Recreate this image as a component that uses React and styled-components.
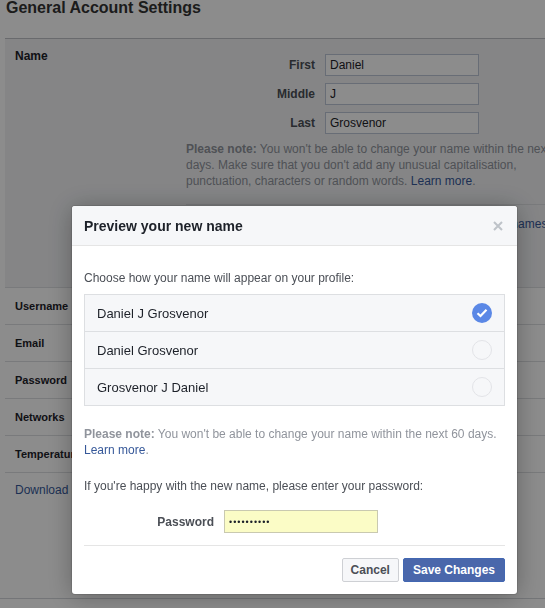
import React from 'react';
import styled, { createGlobalStyle } from 'styled-components';

const GlobalStyle = createGlobalStyle`
  html, body {
    margin: 0;
    padding: 0;
    background: #fff;
    overflow: hidden;
  }
  body {
    font-family: "Liberation Sans", Arial, Helvetica, sans-serif;
    font-size: 12px;
    color: #1d2129;
  }
`;

const Page = styled.div`
  width: 640px;
  height: 608px;
  position: relative;
`;

const Settings = styled.div`
  margin-left: 5px;
`;

const Title = styled.h2`
  margin: 0;
  padding: 0 0 22px 1px;
  font-size: 16px;
  line-height: 16px;
  font-weight: bold;
  color: #333;
  border-bottom: 1px solid #bfc2c7;
`;

const NameSection = styled.div`
  display: flex;
  background: #f2f3f5;
  height: 249px;
  box-sizing: border-box;
  padding: 9px 0 0 10px;
  border-bottom: 1px solid #dddfe2;
`;

const SectionLabel = styled.div`
  width: 171px;
  font-weight: bold;
  font-size: 12px;
  line-height: 16px;
  color: #1d2129;
`;

const SectionBody = styled.div`
  margin-top: 6px;
  width: 410px;
`;

const FieldRow = styled.div`
  display: flex;
  align-items: center;
  gap: 10px;
  margin-bottom: 7px;
`;

const FieldLabel = styled.label`
  width: ${(p) => p.$width || 129}px;
  text-align: right;
  font-weight: bold;
  font-size: 12px;
  color: #4b4f56;
`;

const TextInput = styled.input`
  box-sizing: border-box;
  width: 154px;
  height: ${(p) => p.$height || 22}px;
  padding: 0 4px;
  border: 1px solid ${(p) => (p.$autofill ? '#c9c9b0' : '#bdc7d8')};
  background: ${(p) => (p.$autofill ? '#fbfcc6' : '#fff')};
  font-family: "Liberation Sans", Arial, sans-serif;
  font-size: 12px;
  color: #1d2129;
  outline: none;

  &[type='password'] {
    font-size: 9px;
    letter-spacing: 1px;
  }
`;

const Note = styled.p`
  margin: 0;
  width: 388px;
  font-size: 12px;
  line-height: 16px;
  color: #90949c;
  b {
    font-weight: bold;
  }
`;

const Link = styled.a`
  color: #365899;
  text-decoration: none;
  cursor: pointer;
`;

const SectionFooter = styled.div`
  margin-top: 15px;
  border-top: 1px solid #dddfe2;
  padding-top: 11px;
  line-height: 16px;
  display: flex;
`;

const OtherNames = styled(Link)`
  margin-left: 270px;
  font-size: 12px;
`;

const Row = styled.div`
  display: flex;
  align-items: center;
  height: 36px;
  padding-left: 10px;
  border-bottom: 1px solid #dddfe2;
  font-size: 11px;
  font-weight: bold;
  color: #1d2129;
`;

const DownloadRow = styled.div`
  padding: 9px 10px;
  line-height: 16px;
  font-size: 12px;
`;

const Footer = styled.div`
  margin-top: 91px;
  border-top: 1px solid #d3d6db;
  margin-left: -5px;
`;

const Overlay = styled.div`
  position: fixed;
  inset: 0;
  background: rgba(0, 0, 0, 0.45);
`;

const Dialog = styled.div`
  position: fixed;
  top: 206px;
  left: 72px;
  width: 445px;
  background: #fff;
  border-radius: 3px;
  box-shadow: 0 2px 26px rgba(0, 0, 0, 0.3), 0 0 0 1px rgba(0, 0, 0, 0.1);
  overflow: hidden;
`;

const DialogHeader = styled.div`
  display: flex;
  align-items: center;
  justify-content: space-between;
  height: 39px;
  padding: 0 12px;
  background: #f6f7f9;
  border-bottom: 1px solid #e5e5e5;
`;

const DialogTitle = styled.h3`
  margin: 0;
  font-size: 14px;
  font-weight: bold;
  color: #1d2129;
`;

const Close = styled.button`
  border: 0;
  background: none;
  padding: 0;
  width: 12px;
  height: 12px;
  display: flex;
  align-items: center;
  justify-content: center;
  margin-right: 1px;
  cursor: pointer;
`;

const DialogBody = styled.div`
  padding: 24px 12px 12px;
`;

const Text = styled.p`
  margin: 0 0 ${(p) => p.$gap || 0}px;
  font-size: 12px;
  line-height: 16px;
  color: ${(p) => p.$color || '#4b4f56'};
  b {
    font-weight: bold;
  }
`;

const Choices = styled.div`
  border: 1px solid #dddfe2;
  background: #f6f7f9;
  margin: 8px 0 20px;
`;

const Choice = styled.div`
  display: flex;
  align-items: center;
  justify-content: space-between;
  height: 36px;
  padding: 0 12px;
  font-size: 13px;
  color: #1d2129;
  & + & {
    border-top: 1px solid #dddfe2;
  }
`;

const Radio = styled.span`
  box-sizing: border-box;
  width: 20px;
  height: 20px;
  border-radius: 50%;
  display: flex;
  align-items: center;
  justify-content: center;
  background: ${(p) => (p.$checked ? '#5b88e6' : '#f6f7f9')};
  border: ${(p) => (p.$checked ? '0' : '1px solid #e3e4e8')};
`;

const PasswordRow = styled(FieldRow)`
  margin: 16px 0 12px;
`;

const Actions = styled.div`
  display: flex;
  justify-content: flex-end;
  gap: 4px;
  padding-top: 12px;
  border-top: 1px solid #e5e5e5;
`;

const Button = styled.button`
  box-sizing: border-box;
  height: 24px;
  padding: 0 ${(p) => (p.$primary ? 9 : 8)}px;
  border-radius: 2px;
  border: 1px solid ${(p) => (p.$primary ? '#4267b2' : '#ced0d4')};
  background: ${(p) => (p.$primary ? '#4a67ab' : '#f6f7f9')};
  color: ${(p) => (p.$primary ? '#fff' : '#4b4f56')};
  font-family: "Liberation Sans", Arial, sans-serif;
  font-size: 12px;
  font-weight: bold;
  cursor: pointer;
`;

const names = ['Daniel J Grosvenor', 'Daniel Grosvenor', 'Grosvenor J Daniel'];
const rows = ['Username', 'Email', 'Password', 'Networks', 'Temperature'];

export default function App() {
  return (
    <Page>
      <GlobalStyle />
      <Settings>
        <Title>General Account Settings</Title>
        <NameSection>
          <SectionLabel>Name</SectionLabel>
          <SectionBody>
            <FieldRow>
              <FieldLabel>First</FieldLabel>
              <TextInput defaultValue="Daniel" />
            </FieldRow>
            <FieldRow>
              <FieldLabel>Middle</FieldLabel>
              <TextInput defaultValue="J" />
            </FieldRow>
            <FieldRow>
              <FieldLabel>Last</FieldLabel>
              <TextInput defaultValue="Grosvenor" />
            </FieldRow>
            <Note>
              <b>Please note:</b> You won't be able to change your name within the next 60
              days. Make sure that you don't add any unusual capitalisation, punctuation,
              characters or random words. <Link>Learn more</Link>.
            </Note>
            <SectionFooter>
              <OtherNames>Add other names</OtherNames>
            </SectionFooter>
          </SectionBody>
        </NameSection>
        {rows.map((r) => (
          <Row key={r}>{r}</Row>
        ))}
        <DownloadRow>
          <Link>Download a copy of your Facebook data.</Link>
        </DownloadRow>
        <Footer />
      </Settings>

      <Overlay />

      <Dialog>
        <DialogHeader>
          <DialogTitle>Preview your new name</DialogTitle>
          <Close aria-label="Close">
            <svg width="10" height="10" viewBox="0 0 10 10">
              <path d="M1 1L9 9M9 1L1 9" stroke="#bec3c9" strokeWidth="2" />
            </svg>
          </Close>
        </DialogHeader>
        <DialogBody>
          <Text>Choose how your name will appear on your profile:</Text>
          <Choices>
            {names.map((n, i) => (
              <Choice key={n}>
                {n}
                <Radio $checked={i === 0}>
                  {i === 0 && (
                    <svg width="12" height="10" viewBox="0 0 12 10">
                      <path d="M1.5 5.2L4.5 8L10.5 1.8" fill="none" stroke="#fff" strokeWidth="2.2" />
                    </svg>
                  )}
                </Radio>
              </Choice>
            ))}
          </Choices>
          <Text $color="#90949c">
            <b>Please note:</b> You won't be able to change your name within the next 60 days.
          </Text>
          <Text $gap={20}>
            <Link>Learn more</Link>
            <span style={{ color: '#90949c' }}>.</span>
          </Text>
          <Text>If you're happy with the new name, please enter your password:</Text>
          <PasswordRow>
            <FieldLabel $width={130}>Password</FieldLabel>
            <TextInput type="password" $autofill $height={23} defaultValue="1234567890" />
          </PasswordRow>
          <Actions>
            <Button>Cancel</Button>
            <Button $primary>Save Changes</Button>
          </Actions>
        </DialogBody>
      </Dialog>
    </Page>
  );
}
